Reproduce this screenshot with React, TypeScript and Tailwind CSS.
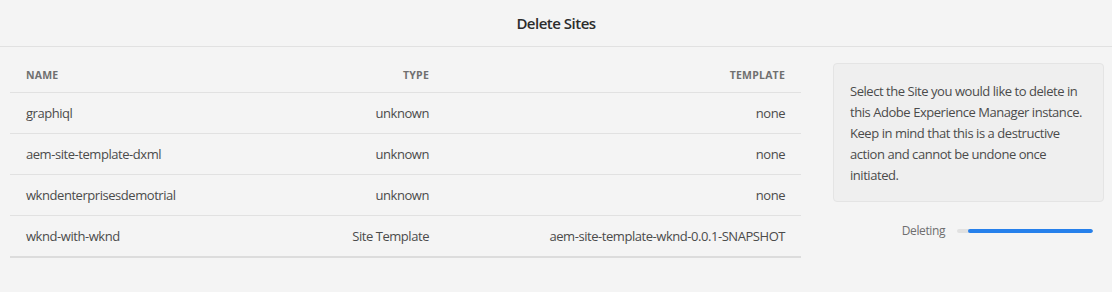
import React from "react";

const rows = [
  { name: "graphiql", type: "unknown", template: "none" },
  { name: "aem-site-template-dxml", type: "unknown", template: "none" },
  { name: "wkndenterprisesdemotrial", type: "unknown", template: "none" },
  { name: "wknd-with-wknd", type: "Site Template", template: "aem-site-template-wknd-0.0.1-SNAPSHOT" },
];

export default function App() {
  return (
    <div
      className="w-[1112px] h-[292px] bg-[#f4f4f4] text-[#4b4b4b] overflow-hidden"
      style={{ fontFamily: '"Open Sans", "Noto Sans", sans-serif' }}
    >
      <div className="h-[47px] border-b border-[#e1e1e1] flex items-center justify-center">
        <h1 className="text-[15px] font-semibold text-[#2c2c2c] tracking-[-0.5px]">Delete Sites</h1>
      </div>
      <div className="flex pl-[10px] pr-[8px] pt-[13px]">
        <div className="w-[791px]">
          <div className="grid grid-cols-[200px_203px_1fr] h-[33px] items-center border-b border-[#e1e1e1] px-[16px] text-[10.5px] font-bold uppercase tracking-[0.02em] text-[#707070]">
            <div>Name</div>
            <div className="text-right">Type</div>
            <div className="text-right">Template</div>
          </div>
          {rows.map((r, i) => (
            <div
              key={r.name}
              className={
                "grid grid-cols-[200px_203px_1fr] items-center px-[16px] pt-[2px] text-[13px] tracking-[-0.45px] " +
                (i === rows.length - 1 ? "border-b-2 border-[#dcdcdc] h-[42px]" : "border-b border-[#e1e1e1] h-[41px]")
              }
            >
              <div>{r.name}</div>
              <div className="text-right">{r.type}</div>
              <div className="text-right">{r.template}</div>
            </div>
          ))}
        </div>
        <div className="ml-[32px] flex-1 pt-[3px]">
          <div className="rounded-[4px] border border-[#e4e4e4] bg-[#efefef] px-[16px] pt-[17px] pb-[15px] text-[13px] leading-[21px] tracking-[-0.45px]">
            Select the Site you would like to delete in this Adobe Experience Manager instance. Keep in mind that this is a destructive action and cannot be undone once initiated.
          </div>
          <div className="flex items-center justify-end pr-[11px] mt-[20px]">
            <span className="text-[12px] text-[#6e6e6e] mr-[12px] tracking-[-0.4px]">Deleting</span>
            <div className="relative w-[136px] h-[4px] rounded-full bg-[#e1e1e1] overflow-hidden">
              <div className="absolute left-[11px] right-0 top-0 bottom-0 rounded-full bg-[#2680eb]" />
            </div>
          </div>
        </div>
      </div>
    </div>
  );
}
